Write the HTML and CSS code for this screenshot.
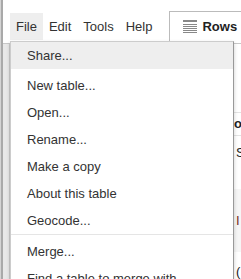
FILE: index.html
```html
<!DOCTYPE html>
<html lang="en">
<head>
   <meta charset="UTF-8">
   <meta name="viewport" content="width=device-width, initial-scale=1.0">
   <link rel="stylesheet" href="styles.css">
</head>
<body>
   <div class="page">
      <div class="gutter"></div>
      <div class="main">
         <div class="header">
            <div class="menubar">
               <div class="menu-btn open">File</div>
               <div class="menu-btn">Edit</div>
               <div class="menu-btn">Tools</div>
               <div class="menu-btn">Help</div>
            </div>
            <div class="tab">
               <svg class="tab-icon" width="14" height="13" viewBox="0 0 14 13">
                  <rect x="0" y="0" width="14" height="2" fill="#888"/>
                  <rect x="0" y="4" width="14" height="1" fill="#888"/>
                  <rect x="0" y="6" width="14" height="1" fill="#888"/>
                  <rect x="0" y="8" width="14" height="1" fill="#888"/>
                  <rect x="0" y="10" width="14" height="1" fill="#888"/>
                  <rect x="0" y="12" width="14" height="1" fill="#888"/>
               </svg>
               <span class="tab-label">Rows</span>
            </div>
         </div>
         <div class="content">
            <div class="strip"></div>
            <div class="table">
               <div class="table-tools"></div>
               <div class="table-head"><span class="cell">o</span></div>
               <div class="table-row"><span class="cell">S<br>(</span></div>
               <div class="table-row alt"><span class="cell red">I</span></div>
               <div class="table-row last"><span class="cell">(</span></div>
            </div>
         </div>
      </div>

      <div class="dropdown">
         <div class="item active">Share...</div>
         <div class="gap"></div>
         <div class="item">New table...</div>
         <div class="item">Open...</div>
         <div class="item">Rename...</div>
         <div class="item">Make a copy</div>
         <div class="item">About this table</div>
         <div class="item">Geocode...</div>
         <div class="separator"></div>
         <div class="item">Merge...</div>
         <div class="item">Find a table to merge with...</div>
      </div>
   </div>
</body>
</html>
```

FILE: styles.css
```css
body {
   font-family: "Liberation Sans", Arial, sans-serif;
   font-size: 13px;
   color: #333;
   background-color: #fff;
   margin: 0;
   padding: 0;
   overflow: hidden;
}
.page {
   display: flex;
   height: 279px;
   position: relative;
}
.gutter {
   width: 2px;
   border-left: 1px solid #d4d4d4;
   background-color: #a9a9a9;
   flex-shrink: 0;
}
.main {
   flex: 1;
   display: flex;
   flex-direction: column;
   min-width: 0;
}
.header {
   display: flex;
   align-items: flex-start;
   height: 43px;
   padding-left: 7px;
   border-bottom: 1px solid #c8c8c8;
}
.menubar {
   display: flex;
   margin-top: 13px;
   flex-shrink: 0;
}
.menu-btn {
   padding: 0 6px;
   line-height: 27px;
   height: 27px;
}
.menu-btn.open {
   background-color: #eee;
}
.tab {
   display: flex;
   align-items: center;
   flex-shrink: 0;
   margin-left: 11px;
   margin-top: 11px;
   height: 29px;
   padding: 0 12px 3px 13px;
   border: 1px solid #bbb;
   border-bottom: none;
}
.tab-icon {
   margin-right: 5px;
}
.tab-label {
   font-weight: bold;
   color: #222;
}
.content {
   flex: 1;
   display: flex;
}
.strip {
   width: 6px;
   background-color: #e8e8e8;
   border-right: 1px solid #ccc;
   flex-shrink: 0;
}
.table {
   flex: 1;
   display: flex;
   flex-direction: column;
}
.table-tools {
   height: 68px;
}
.table-head {
   border-top: 1px solid #e3e3e3;
   border-bottom: 1px solid #e3e3e3;
   height: 22px;
   line-height: 22px;
   font-weight: bold;
   color: #222;
}
.cell {
   padding-left: 224px;
}
.table-row {
   padding: 7px 0 8px;
   line-height: 19px;
   white-space: nowrap;
}
.table-row .cell {
   padding-left: 226px;
   color: #222;
}
.table-row.alt {
   background-color: #f6f6f6;
   padding: 22px 0 22px;
}
.table-row.last {
   padding-top: 10px;
}
.cell.red {
   color: #7a2a1c;
}
.dropdown {
   position: absolute;
   left: 10px;
   top: 41px;
   width: 222px;
   background-color: #fff;
   border: 1px solid #ccc;
   border-right-color: #999;
   box-shadow: 0 2px 4px rgba(0, 0, 0, 0.2);
}
.item {
   padding: 5px 16px;
   line-height: 17px;
   white-space: nowrap;
}
.item.active {
   background-color: #eee;
}
.gap {
   height: 3px;
}
.separator {
   height: 1px;
   background-color: #e5e5e5;
   margin-bottom: 3px;
}
```
